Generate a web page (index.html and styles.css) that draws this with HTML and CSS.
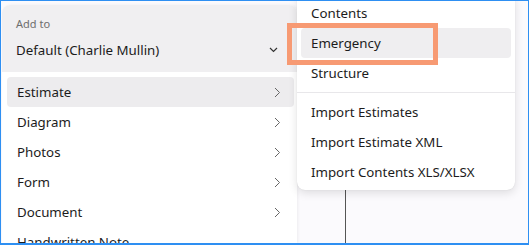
FILE: index.html
```html
<!DOCTYPE html>
<html lang="en">
<head>
  <meta charset="UTF-8">
  <meta name="viewport" content="width=device-width, initial-scale=1.0">
  <link rel="stylesheet" href="styles.css">
  <title>Add to</title>
</head>
<body>
  <div class="frame">
    <div class="panel">
      <div class="add-to">
        <div class="add-to-label">Add to</div>
        <div class="add-to-value">
          <span>Default (Charlie Mullin)</span>
          <svg class="chev-down" width="9" height="6" viewBox="0 0 9 6"><path d="M1 1l3.5 3.5L8 1" fill="none" stroke="#333" stroke-width="1.2"/></svg>
        </div>
      </div>
      <ul class="list">
        <li class="row active">Estimate <svg class="chev" width="7" height="11" viewBox="0 0 7 11"><path d="M1 1l4.5 4.5L1 10" fill="none" stroke="#666" stroke-width="1"/></svg></li>
        <li class="row">Diagram <svg class="chev" width="7" height="11" viewBox="0 0 7 11"><path d="M1 1l4.5 4.5L1 10" fill="none" stroke="#666" stroke-width="1"/></svg></li>
        <li class="row">Photos <svg class="chev" width="7" height="11" viewBox="0 0 7 11"><path d="M1 1l4.5 4.5L1 10" fill="none" stroke="#666" stroke-width="1"/></svg></li>
        <li class="row">Form <svg class="chev" width="7" height="11" viewBox="0 0 7 11"><path d="M1 1l4.5 4.5L1 10" fill="none" stroke="#666" stroke-width="1"/></svg></li>
        <li class="row">Document <svg class="chev" width="7" height="11" viewBox="0 0 7 11"><path d="M1 1l4.5 4.5L1 10" fill="none" stroke="#666" stroke-width="1"/></svg></li>
        <li class="row">Handwritten Note</li>
      </ul>
    </div>
    <div class="canvas">
      <div class="rule"></div>
    </div>

    <!-- submenu for Estimate -->
    <ul class="menu">
      <li class="item">Contents</li>
      <li class="item current">Emergency</li>
      <li class="item">Structure</li>
      <li class="sep"></li>
      <li class="item">Import Estimates</li>
      <li class="item">Import Estimate XML</li>
      <li class="item">Import Contents XLS/XLSX</li>
    </ul>
    <div class="callout"></div>
  </div>
</body>
</html>
```

FILE: styles.css
```css
/* Reset default margin and padding */
body, ul, li {
  margin: 0;
  padding: 0;
}

body {
  font-family: "Noto Sans", "Open Sans", sans-serif;
  color: #1c1c1c;
  background: #fff;
}

.frame {
  position: relative;
  box-sizing: border-box;
  width: 529px;
  height: 245px;
  border: 1px solid #2e8ff2;
  border-bottom-width: 2px;
  background: #fbfafd;
  display: flex;
  overflow: hidden;
}

.panel {
  width: 295px;
  flex-shrink: 0;
  margin-top: 4px;
  margin-left: 1px;
  display: flex;
  flex-direction: column;
  background: #fff;
  border-radius: 8px 8px 0 0;
  box-shadow: 1px 0 3px rgba(0, 0, 0, 0.06);
}

.add-to {
  flex-shrink: 0;
  height: 67px;
  box-sizing: border-box;
  padding: 11px 14px 0 14px;
  background: #f0eff1;
  border-radius: 8px 8px 0 0;
}

.add-to-label {
  font-size: 11px;
  color: #6e6e6e;
  line-height: 16px;
}

.add-to-value {
  display: flex;
  justify-content: space-between;
  align-items: center;
  margin-top: 8px;
  font-size: 13.3px;
  line-height: 20px;
}

.chev-down {
  margin-right: 5px;
}

.list {
  list-style: none;
  padding: 5px 3px 0 5px;
}

.row {
  display: flex;
  flex-shrink: 0;
  justify-content: space-between;
  align-items: center;
  height: 30px;
  padding: 0 13px 0 10px;
  font-size: 13.3px;
  border-radius: 4px;
}

.row.active {
  background: #edecee;
}

.canvas {
  flex: 1;
  display: flex;
}

.rule {
  width: 1px;
  margin-left: 48px;
  background: #555;
}

.menu {
  position: absolute;
  left: 296px;
  top: -7px;
  width: 218px;
  box-sizing: border-box;
  list-style: none;
  padding: 4px 4px 3px 4px;
  background: #fff;
  border-radius: 8px;
  box-shadow: 0 3px 10px rgba(0, 0, 0, 0.12), 0 0 1px rgba(0, 0, 0, 0.15);
}

.item {
  height: 30px;
  line-height: 30px;
  padding-left: 10px;
  font-size: 13.3px;
  border-radius: 4px;
}

.item.current {
  background: #efeef0;
}

.sep {
  height: 1px;
  margin: 4px -4px 4px -4px;
  background: #e8e7ea;
}

.callout {
  position: absolute;
  left: 286px;
  top: 22px;
  width: 151px;
  height: 42px;
  border: 5px solid #f79a73;
  box-sizing: border-box;
}
```
